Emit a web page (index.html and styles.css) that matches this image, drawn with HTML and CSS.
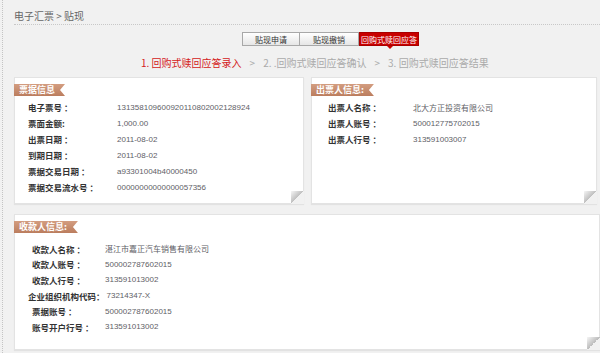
FILE: index.html
```html
<!DOCTYPE html>
<html lang="zh">
<head>
<meta charset="utf-8">
<link rel="stylesheet" href="styles.css">
</head>
<body>
<div class="page">
  <div class="crumb">电子汇票 &gt; 贴现</div>
  <div class="tabs">
    <span class="tab t1">贴现申请</span>
    <span class="tab t2">贴现撤销</span>
    <span class="tab active">回购式赎回应答</span>
  </div>
  <div class="steps">
    <span class="step current">1. 回购式赎回应答录入</span>
    <span class="sep">&gt;</span>
    <span class="step">2. .回购式赎回应答确认</span>
    <span class="sep">&gt;</span>
    <span class="step">3. 回购式赎回应答结果</span>
  </div>

  <div class="panels-top">
    <section class="panel p1">
      <div class="tag">票据信息</div>
      <div class="rows">
        <div class="row"><span class="label">电子票号 ：</span><span class="value">131358109600920110802002128924</span></div>
        <div class="row"><span class="label">票面金额:</span><span class="value">1,000.00</span></div>
        <div class="row"><span class="label">出票日期 ：</span><span class="value">2011-08-02</span></div>
        <div class="row"><span class="label">到期日期 ：</span><span class="value">2011-08-02</span></div>
        <div class="row"><span class="label">票据交易日期 ：</span><span class="value">a93301004b40000450</span></div>
        <div class="row"><span class="label">票据交易流水号 ：</span><span class="value">00000000000000057356</span></div>
      </div>
    </section>
    <section class="panel p2">
      <div class="tag">出票人信息:</div>
      <div class="rows">
        <div class="row"><span class="label">出票人名称 ：</span><span class="value cjk">北大方正投资有限公司</span></div>
        <div class="row"><span class="label">出票人账号 ：</span><span class="value">500012775702015</span></div>
        <div class="row"><span class="label">出票人行号 ：</span><span class="value">313591003007</span></div>
      </div>
    </section>
  </div>

  <section class="panel p3">
    <div class="tag">收款人信息:</div>
    <div class="rows">
      <div class="row"><span class="label">收款人名称 ：</span><span class="value cjk">湛江市嘉正汽车销售有限公司</span></div>
      <div class="row"><span class="label">收款人账号 ：</span><span class="value">500002787602015</span></div>
      <div class="row"><span class="label">收款人行号 ：</span><span class="value">313591013002</span></div>
      <div class="row wide"><span class="label">企业组织机构代码：</span><span class="value">73214347-X</span></div>
      <div class="row"><span class="label">票据账号 ：</span><span class="value">500002787602015</span></div>
      <div class="row"><span class="label">账号开户行号 ：</span><span class="value">313591013002</span></div>
    </div>
  </section>
</div>
</body>
</html>
```

FILE: styles.css
```css
* { box-sizing: border-box; }
html, body {
  margin: 0;
  padding: 0;
  background: #f1f1f1;
  font-family: "Noto Sans CJK SC", "Liberation Sans", sans-serif;
}
.page {
  margin-left: 2px;
  border-left: 1px dotted #c4c4c4;
  padding-left: 11px;
  min-height: 353px;
  width: 598px;
}
.crumb {
  font-size: 10px;
  line-height: 14px;
  color: #666;
  padding-top: 9px;
  height: 25px;
  border-bottom: 1px dotted #c8c8c8;
}
.tabs {
  display: flex;
  margin-top: 7px;
  margin-left: 228px;
  height: 14px;
}
.tab {
  display: flex;
  align-items: center;
  justify-content: center;
  height: 14px;
  font-size: 8px;
  color: #333;
  border: 1px solid #a8a8a8;
  background: linear-gradient(#ffffff, #e6e6e6);
}
.t1 { width: 58px; }
.t2 { width: 59px; border-left: none; }
.tab.active {
  position: relative;
  width: 60px;
  color: #fff;
  background: #c80000;
  border-color: #a80000;
}
.tab.active::after {
  content: "";
  position: absolute;
  left: 27px;
  bottom: -4px;
  border-left: 3px solid transparent;
  border-right: 3px solid transparent;
  border-top: 3px solid #c80000;
}
.steps {
  display: flex;
  align-items: center;
  margin-top: 9px;
  margin-left: 127px;
  height: 14px;
  font-size: 10px;
  color: #aaa;
}
.step.current { color: #d42020; }
.sep { margin: 0 8px; color: #aaa; }

.panels-top {
  display: flex;
  gap: 7px;
  margin-top: 8px;
}
.panel {
  position: relative;
  display: flex;
  flex-direction: column;
  align-items: flex-start;
  background: #fff;
  border: 1px solid #e3e3e3;
  box-shadow: 0 1px 1px rgba(0,0,0,0.06);
  padding-top: 6px;
}
.panel::after {
  content: "";
  position: absolute;
  right: -1px;
  bottom: -1px;
  width: 13px;
  height: 13px;
  background: linear-gradient(to top left, #f1f1f1 50%, #bdbdbd 50%, #f6f6f6 100%);
}
.p1 { width: 290px; height: 127px; }
.p2 { width: 286px; height: 127px; }
.p3 { width: 586px; height: 136px; margin-top: 10px; }

.tag {
  display: flex;
  align-items: center;
  height: 12px;
  margin-left: -1px;
  padding: 0 10px 0 5px;
  font-size: 9px;
  line-height: 12px;
  font-weight: bold;
  color: #fff;
  background: linear-gradient(#d39d80, #bb7d5e);
  clip-path: polygon(0 0, 100% 0, calc(100% - 5px) 50%, 100% 100%, 0 100%);
}
.p3 .tag { padding-right: 11px; }

.rows { display: flex; flex-direction: column; margin-top: 3px; align-self: stretch; }
.row {
  display: flex;
  align-items: center;
  height: 16px;
}
.label {
  flex-shrink: 0;
  white-space: nowrap;
  font-size: 8.5px;
  font-weight: bold;
  color: #333;
}
.value {
  white-space: nowrap;
  font-family: "Liberation Sans", "Noto Sans CJK SC", sans-serif;
  font-size: 8px;
  color: #5e5e66;
}
.value.cjk { font-family: "Noto Sans CJK SC", sans-serif; }

.p1 .rows { padding-left: 13px; }
.p1 .label { width: 89px; }
.p2 .rows { padding-left: 16px; }
.p2 .label { width: 85px; }
.p3 .rows { padding-left: 17px; margin-top: 8px; }
.p3 .row { height: 15.6px; }
.p3 .label { min-width: 73px; }
.p3 .row.wide .label { margin-left: -4px; margin-right: 2px; }
```
